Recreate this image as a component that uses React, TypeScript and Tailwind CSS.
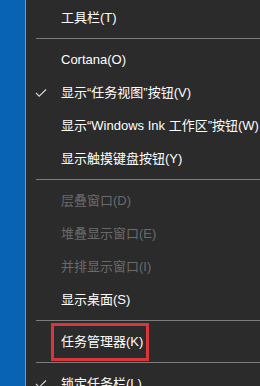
import React from 'react';

type Item =
  | { kind: 'item'; label: string; checked?: boolean; disabled?: boolean; boxed?: boolean }
  | { kind: 'sep' };

const items: Item[] = [
  { kind: 'item', label: '工具栏(T)' },
  { kind: 'sep' },
  { kind: 'item', label: 'Cortana(O)' },
  { kind: 'item', label: '显示“任务视图”按钮(V)', checked: true },
  { kind: 'item', label: '显示“Windows Ink 工作区”按钮(W)' },
  { kind: 'item', label: '显示触摸键盘按钮(Y)' },
  { kind: 'sep' },
  { kind: 'item', label: '层叠窗口(D)', disabled: true },
  { kind: 'item', label: '堆叠显示窗口(E)', disabled: true },
  { kind: 'item', label: '并排显示窗口(I)', disabled: true },
  { kind: 'item', label: '显示桌面(S)' },
  { kind: 'sep' },
  { kind: 'item', label: '任务管理器(K)', boxed: true },
  { kind: 'sep' },
  { kind: 'item', label: '锁定任务栏(L)', checked: true },
];

const Check = () => (
  <svg width="12" height="9" viewBox="0 0 12 9" className="absolute left-[9px] top-1/2 -translate-y-1/2">
    <path d="M1 4.5 L4.2 7.7 L11 1" fill="none" stroke="#d8d8d8" strokeWidth="1.1" />
  </svg>
);

const App = () => {
  return (
    <div className="w-[260px] h-[386px] overflow-hidden flex bg-[#2b2b2b] font-['Liberation_Sans','Noto_Sans_CJK_SC',sans-serif]">
      <div className="w-[26px] shrink-0 bg-[#0863b4] border-r border-[#6d9ccd]" />
      <div className="flex-1 pt-px">
        {items.map((it, i) =>
          it.kind === 'sep' ? (
            <div key={i} className="h-[9px] flex items-center pl-[10px]">
              <div className="h-px w-full bg-[#7d7d7d]" />
            </div>
          ) : (
            <div key={i} className="relative h-[33px] flex items-center pl-[35px]">
              {it.checked && <Check />}
              <span
                className={`text-[13px] whitespace-nowrap ${it.disabled ? 'text-[#6a6a6a]' : 'text-white'}`}
              >
                {it.label}
              </span>
              {it.boxed && (
                <div className="absolute left-[25px] top-[-2px] w-[98px] h-[38px] border-[3px] border-[#d8363c]" />
              )}
            </div>
          )
        )}
      </div>
    </div>
  );
};

export default App;
